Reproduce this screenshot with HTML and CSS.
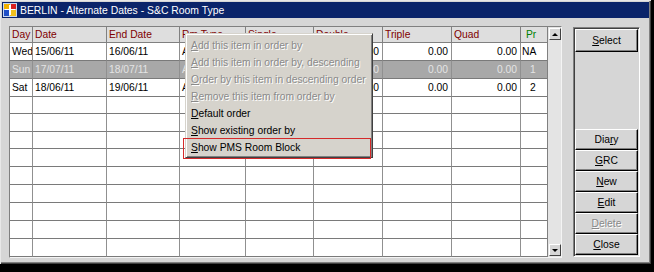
FILE: index.html
```html
<!DOCTYPE html>
<html lang="en">

<head>
  <meta charset="UTF-8">
  <title>BERLIN - Alternate Dates - S&amp;C Room Type</title>
  <link rel="stylesheet" href="styles.css">
</head>

<body>
  <div class="window">
    <div class="titlebar">
      <svg class="app-icon" width="14" height="14" viewBox="0 0 14 14">
        <rect x="0" y="0" width="14" height="14" fill="#c8d8f0"/>
        <rect x="1" y="1" width="6" height="5" fill="#f0b000"/>
        <rect x="8" y="1" width="5" height="5" fill="#d82020"/>
        <rect x="1" y="7" width="5" height="6" fill="#2050c8"/>
        <rect x="7" y="7" width="6" height="6" fill="#f0c020"/>
        <rect x="6" y="2" width="2" height="10" fill="#fff"/>
        <rect x="2" y="6" width="10" height="1" fill="#fff"/>
      </svg>
      <span class="title">BERLIN - Alternate Dates - S&amp;C Room Type</span>
    </div>

    <div class="client">
      <div class="gridframe">
        <div class="grid">
          <div class="c h">Day</div>
          <div class="c h">Date</div>
          <div class="c h">End Date</div>
          <div class="c h">Rm Type</div>
          <div class="c h">Single</div>
          <div class="c h">Double</div>
          <div class="c h">Triple</div>
          <div class="c h">Quad</div>
          <div class="c h pr">Pr</div>

          <div class="c">Wed</div>
          <div class="c">15/06/11</div>
          <div class="c">16/06/11</div>
          <div class="c">A</div>
          <div class="c num"></div>
          <div class="c num">0.00</div>
          <div class="c num">0.00</div>
          <div class="c num">0.00</div>
          <div class="c last">NA</div>

          <div class="c sel">Sun</div>
          <div class="c sel">17/07/11</div>
          <div class="c sel">18/07/11</div>
          <div class="c sel">A</div>
          <div class="c sel num"></div>
          <div class="c sel num">0.00</div>
          <div class="c sel num">0.00</div>
          <div class="c sel num">0.00</div>
          <div class="c sel last digit">1</div>

          <div class="c">Sat</div>
          <div class="c">18/06/11</div>
          <div class="c">19/06/11</div>
          <div class="c">A</div>
          <div class="c num"></div>
          <div class="c num">0.00</div>
          <div class="c num">0.00</div>
          <div class="c num">0.00</div>
          <div class="c last digit">2</div>

          <div class="c"></div><div class="c"></div><div class="c"></div><div class="c"></div><div class="c"></div><div class="c"></div><div class="c"></div><div class="c"></div><div class="c last"></div>
          <div class="c"></div><div class="c"></div><div class="c"></div><div class="c"></div><div class="c"></div><div class="c"></div><div class="c"></div><div class="c"></div><div class="c last"></div>
          <div class="c"></div><div class="c"></div><div class="c"></div><div class="c"></div><div class="c"></div><div class="c"></div><div class="c"></div><div class="c"></div><div class="c last"></div>
          <div class="c"></div><div class="c"></div><div class="c"></div><div class="c"></div><div class="c"></div><div class="c"></div><div class="c"></div><div class="c"></div><div class="c last"></div>
          <div class="c"></div><div class="c"></div><div class="c"></div><div class="c"></div><div class="c"></div><div class="c"></div><div class="c"></div><div class="c"></div><div class="c last"></div>
          <div class="c"></div><div class="c"></div><div class="c"></div><div class="c"></div><div class="c"></div><div class="c"></div><div class="c"></div><div class="c"></div><div class="c last"></div>
          <div class="c"></div><div class="c"></div><div class="c"></div><div class="c"></div><div class="c"></div><div class="c"></div><div class="c"></div><div class="c"></div><div class="c last"></div>
          <div class="c"></div><div class="c"></div><div class="c"></div><div class="c"></div><div class="c"></div><div class="c"></div><div class="c"></div><div class="c"></div><div class="c last"></div>
          <div class="c"></div><div class="c"></div><div class="c"></div><div class="c"></div><div class="c"></div><div class="c"></div><div class="c"></div><div class="c"></div><div class="c last"></div>
        </div>

        <div class="scrollbar">
          <div class="sb-btn"><span class="arrow up"></span></div>
          <div class="sb-track"></div>
          <div class="sb-btn"><span class="arrow down"></span></div>
        </div>
      </div>

      <div class="panel">
        <button class="btn"><u>S</u>elect</button>
        <div class="stack">
          <button class="btn">Dia<u>r</u>y</button>
          <button class="btn"><u>G</u>RC</button>
          <button class="btn"><u>N</u>ew</button>
          <button class="btn"><u>E</u>dit</button>
          <button class="btn off"><u>D</u>elete</button>
          <button class="btn"><u>C</u>lose</button>
        </div>
      </div>
    </div>

    <div class="ctxmenu">
      <div class="item off"><u>A</u>dd this item in order by</div>
      <div class="item off"><u>A</u>dd this item in order by, descending</div>
      <div class="item off"><u>O</u>rder by this item in descending order</div>
      <div class="item off"><u>R</u>emove this item from order by</div>
      <div class="item"><u>D</u>efault order</div>
      <div class="item"><u>S</u>how existing order by</div>
      <div class="item"><u>S</u>how PMS Room Block</div>
    </div>
    <div class="callout"></div>
  </div>
</body>

</html>
```

FILE: styles.css
```css
body,
html {
  margin: 0;
  padding: 0;
  background-color: #000;
  font-family: "Liberation Sans", Arial, sans-serif;
  font-size: 10.3px;
}

.window {
  position: relative;
  box-sizing: border-box;
  width: 651px;
  height: 264px;
  padding: 2px;
  background-color: #d6d6d6;
  box-shadow: inset 1px 1px 0 #e8e8e8, inset -1px -1px 0 #404040, inset -2px -2px 0 #808080;
}

.titlebar {
  display: flex;
  align-items: center;
  gap: 3px;
  height: 16px;
  padding-left: 1px;
  background-color: #0a246a;
  color: #fff;
}

.titlebar .title {
  font-size: 10.4px;
}

.client {
  display: flex;
  align-items: flex-start;
  gap: 11px;
  padding: 8px 0 0 7px;
}

/* grid + scrollbar */
.gridframe {
  display: flex;
  border: 1px solid;
  border-color: #808080 #f4f4f4 #f4f4f4 #808080;
}

.grid {
  display: grid;
  width: 537px;
  grid-template-columns: 23px 74px 73px 66px 68px 69px 69px 69px 26px;
  grid-template-rows: 16px 18px 18px 18px 17px 18px 17px 18px 18px 18px 18px 18px 18px;
  background-color: #fff;
}

.grid .c {
  box-sizing: border-box;
  display: flex;
  align-items: center;
  padding: 0 2px;
  border-right: 1px solid #909090;
  border-bottom: 1px solid #7a7a7a;
  white-space: nowrap;
  overflow: hidden;
  color: #000;
}

.grid .c.h {
  background-color: #dedede;
  color: #800000;
  border-right-color: #808080;
  border-bottom-color: #808080;
}

.grid .c.h.pr {
  color: #008000;
  padding-left: 5px;
  border-right: none;
}

.grid .c.num {
  justify-content: flex-end;
  padding: 0 3px;
}

.grid .c.last {
  border-right: none;
  padding-left: 1px;
}

.grid .c.digit {
  padding-left: 9px;
}

.grid .c.sel {
  background-color: #a8a8a8;
  color: #e4e4e4;
}

.scrollbar {
  display: flex;
  flex-direction: column;
  width: 14px;
  box-sizing: border-box;
  border-left: 1px solid #808080;
  background-color: #e4e4e4;
}

.sb-track {
  flex-grow: 1;
}

.sb-btn {
  display: flex;
  align-items: center;
  justify-content: center;
  box-sizing: border-box;
  width: 12px;
  height: 12px;
  margin: 1px 0 1px 1px;
  background-color: #d6d6d6;
  border: 1px solid;
  border-color: #fff #404040 #404040 #fff;
}

.arrow {
  width: 0;
  height: 0;
  border-left: 3px solid transparent;
  border-right: 3px solid transparent;
}

.arrow.up {
  border-bottom: 3px solid #000;
}

.arrow.down {
  border-top: 3px solid #000;
}

/* right button panel */
.panel {
  display: flex;
  flex-direction: column;
  box-sizing: border-box;
  width: 67px;
  height: 230px;
  margin-top: 1px;
  border: 1px solid;
  border-color: #808080 #fff #fff #808080;
  box-shadow: inset 1px 1px 0 #404040;
}

.panel .stack {
  display: flex;
  flex-direction: column;
  margin-top: auto;
  margin-bottom: 1px;
}

.btn {
  box-sizing: border-box;
  width: 63px;
  height: 21px;
  margin: 0 0 0 1px;
  padding: 0;
  font-family: inherit;
  font-size: 10.3px;
  color: #000;
  background-color: #d6d6d6;
  border: 1px solid;
  border-color: #fff #000 #000 #fff;
  box-shadow: inset -1px -1px 0 #808080;
}

.panel > .btn {
  height: 23px;
  margin-top: 1px;
}

.btn.off {
  color: #888;
  text-shadow: 1px 1px 0 #fff;
}

/* popup menu */
.ctxmenu {
  position: absolute;
  left: 185px;
  top: 33px;
  width: 188px;
  box-sizing: border-box;
  padding: 3px 0 1px;
  background-color: #d6d3cc;
  border: 1px solid;
  border-color: #d6d3cc #404040 #404040 #d6d3cc;
  box-shadow: inset 1px 1px 0 #fff, inset -1px -1px 0 #808080;
}

.ctxmenu .item {
  height: 17px;
  line-height: 17px;
  padding-left: 5px;
  white-space: nowrap;
  color: #000;
}

.ctxmenu .item.off {
  color: #8a8a8a;
  text-shadow: 1px 1px 0 #fff;
}

.callout {
  position: absolute;
  left: 183px;
  top: 138px;
  width: 188px;
  height: 21px;
  box-sizing: border-box;
  border: 1px solid #d42a2a;
}
```
